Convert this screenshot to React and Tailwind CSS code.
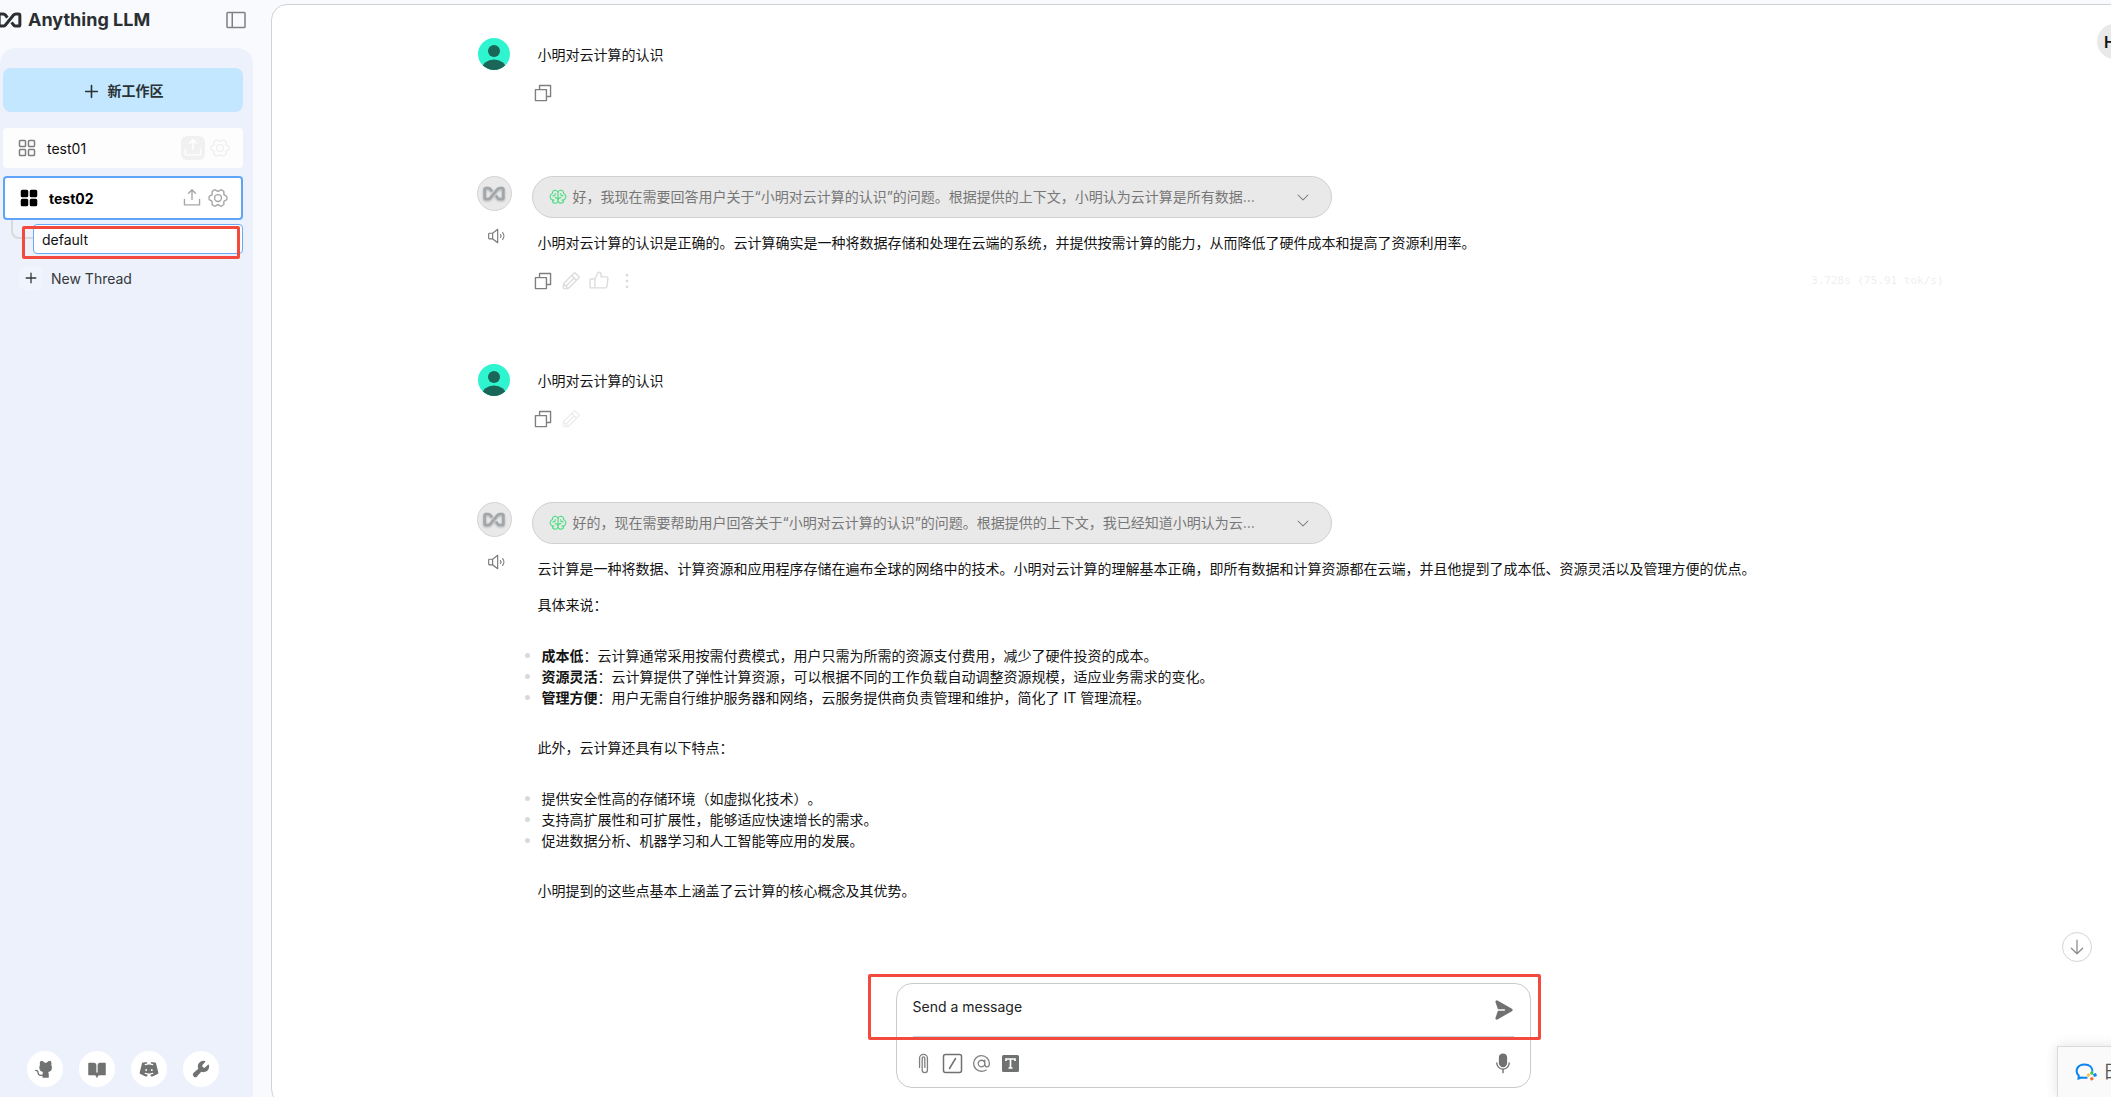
import {
  PiArrowDown, PiAt, PiBookOpenFill, PiBrain, PiCaretDown, PiCopy, PiDiscordLogoFill,
  PiDotsThreeVerticalBold, PiGearSix, PiGithubLogoFill, PiMicrophoneFill, PiPaperclipHorizontal,
  PiPaperPlaneRightFill, PiPencil, PiPlusBold, PiSidebarSimple, PiSpeakerHigh, PiSquaresFour,
  PiSquaresFourFill, PiThumbsUp, PiUploadSimple, PiWrenchFill,
} from 'react-icons/pi'

const footerLinks = [
  { label: 'GitHub', icon: PiGithubLogoFill },
  { label: 'Docs', icon: PiBookOpenFill },
  { label: 'Discord', icon: PiDiscordLogoFill },
  { label: 'Settings', icon: PiWrenchFill },
]

function LogoMark({ className }) {
  return (
    <svg viewBox="0 0 26 17" className={className} fill="none" stroke="currentColor" strokeWidth="3.2" strokeLinejoin="round" aria-hidden="true">
      <path d="M10.8 6 L8.6 3.200 Q7.700 2 6.200 2 H3.500 Q2 2 2 3.500 V13.500 Q2 15 3.500 15 H6.200 Q7.700 15 8.700 13.800 L17.300 3.200 Q18.300 2 19.800 2 H22.500 Q24 2 24 3.500 V13.500 Q24 15 22.500 15 H19.800 Q18.300 15 17.400 13.800 L15.200 11" />
    </svg>
  )
}

function UserAvatar() {
  return (
    <svg viewBox="0 0 32 32" className="size-8 mx-auto rounded-full" aria-hidden="true">
      <rect width="32" height="32" fill="#2ef4d0" />
      <circle cx="16" cy="13" r="6" fill="#1a6658" />
      <ellipse cx="16" cy="31" rx="12" ry="9.500" fill="#1a6658" />
    </svg>
  )
}

function IconButton({ label, className = 'text-[#7f7f7f]', children }) {
  return <button type="button" aria-label={label} className={className}>{children}</button>
}

function UserMessage({ text, edit }) {
  return (
    <article className="grid grid-cols-[36px_1fr] gap-x-5">
      <UserAvatar />
      <div className="pt-[7px] pl-1.5">
        <p>{text}</p>
        <div className="mt-5 h-4 flex items-center gap-1.5 -ml-1.5">
          <IconButton label="Copy"><PiCopy className="size-[22px]" /></IconButton>
          {edit && <IconButton label="Edit" className="text-[#ededed]"><PiPencil className="size-[22px]" /></IconButton>}
        </div>
      </div>
    </article>
  )
}

function AssistantMessage({ thought, children }) {
  return (
    <article className="grid grid-cols-[36px_1fr] gap-x-5">
      <div className="flex flex-col items-end">
        <span className="size-[35px] rounded-full border border-[#d4d4d4] bg-[#e9e9e9] flex items-center justify-center text-[#a0a6a9]">
          <LogoMark className="w-[22px] h-[15px] drop-shadow-[0_1px_1px_rgba(0,0,0,0.25)]" />
        </span>
        <IconButton label="Speak" className="mt-4 mr-[7px] text-[#777]"><PiSpeakerHigh className="size-[18px]" /></IconButton>
      </div>
      <div>
        <button type="button" className="flex items-center w-full max-w-[800px] h-[42px] pl-4 pr-5 rounded-full border border-[#d0d0d0] bg-[#e9e9e9] text-[#777] text-left">
          <PiBrain className="size-[18px] mr-1.5 text-[#4ade80]" />
          <span>{thought}</span>
          <PiCaretDown className="size-4 ml-auto" />
        </button>
        <div className="pl-1.5 pt-[15px]">{children}</div>
      </div>
    </article>
  )
}

function BulletList({ children }) {
  return <ul className="my-[30px] leading-[21px]">{children}</ul>
}

function Bullet({ title, children }) {
  return (
    <li className="flex items-center -ml-[13px]">
      <span className="size-[5px] mr-3 rounded-full bg-[#d9d9d9]" />
      <span>{title && <strong>{title}</strong>}{children}</span>
    </li>
  )
}

function Sidebar() {
  return (
    <aside className="w-[271px] shrink-0 flex flex-col">
      <header className="h-12 flex items-center pb-3 pt-1 pr-[23px] text-[#2c2f31]">
        <LogoMark className="w-[25px] h-4 -ml-[3px]" />
        <span className="ml-1.5 text-[18px] leading-6 font-bold">Anything LLM</span>
        <button type="button" aria-label="Toggle sidebar" className="ml-auto text-[#808080]"><PiSidebarSimple className="size-6" /></button>
      </header>
      <div className="flex-1 -mb-3.5 w-[253px] pl-[3px] pr-2.5 pt-5 pb-6 rounded-2xl bg-[#ecf1fb] flex flex-col">
        <button type="button" className="h-11 pt-0.5 rounded-lg bg-[#c2e7fe] flex items-center justify-center gap-2 text-[#2b3236] font-bold">
          <PiPlusBold className="size-[17px]" />新工作区
        </button>

        <div className="mt-4 h-10 rounded bg-[#fdfdfd] flex items-center px-3">
          <PiSquaresFour className="size-6 text-[#7f7f7f]" />
          <a href="#test01" className="ml-2 pt-0.5 flex-1 text-[#111]">test01</a>
          <button type="button" aria-label="Upload" className="size-6 rounded-md bg-[#f1f1f1] text-white flex items-center justify-center"><PiUploadSimple className="size-[22px]" /></button>
          <button type="button" aria-label="Settings" className="ml-1 text-[#f0f0f0]"><PiGearSix className="size-[22px]" /></button>
        </div>

        <div className="mt-2 h-11 rounded border-2 border-[#5ea5f8] bg-white flex items-center px-3">
          <PiSquaresFourFill className="size-6 text-black" />
          <a href="#test02" className="ml-2 pt-0.5 flex-1 font-bold text-black">test02</a>
          <button type="button" aria-label="Upload" className="text-[#a6a6a6]"><PiUploadSimple className="size-[22px]" /></button>
          <button type="button" aria-label="Settings" className="ml-1 text-[#a6a6a6]"><PiGearSix className="size-[22px]" /></button>
        </div>

        <div className="relative flex pl-2">
          <span className="w-[22px] h-[19px] border-l-2 border-b-2 border-[#d8dadd] rounded-bl-lg" />
          <a href="#default" className="mt-1 pt-0.5 flex-1 h-[30px] rounded border border-[#6aa9f7] bg-white flex items-center pl-2 text-[#111]">default</a>
          <span className="absolute left-[19px] right-[3px] top-1.5 h-[33px] rounded-xs border-3 border-[#f44a3e]" />
        </div>

        <button type="button" className="mt-3 ml-4 flex items-center gap-2 text-[#35383a]">
          <span className="size-6 rounded-md bg-[#f0f4fc] flex items-center justify-center"><PiPlusBold className="size-3.5" /></span>
          <span className="pt-0.5">New Thread</span>
        </button>

        <nav className="mt-auto flex gap-4 pl-6">
          {footerLinks.map(({ label, icon: Icon }) => (
            <a key={label} href={`#${label}`} aria-label={label} className="size-9 rounded-full bg-white flex items-center justify-center text-[#6f7270]">
              <Icon className="size-5" />
            </a>
          ))}
        </nav>
      </div>
    </aside>
  )
}

function Composer() {
  return (
    <form className="relative w-full max-w-[635px] mx-auto mb-4 h-[105px] shrink-0 px-4 rounded-2xl border border-[#cacaca] bg-white flex flex-col">
      <div className="h-[53px] flex items-center border-b border-[#cbd5e1] text-[#6f7270]">
        <input aria-label="Message" placeholder="Send a message" className="flex-1 pb-1.5 outline-none placeholder:text-[#222]" />
        <button type="submit" aria-label="Send"><PiPaperPlaneRightFill className="size-[22px]" /></button>
      </div>
      <div className="flex-1 flex items-center gap-2 pt-0.5 text-[#6f7270]">
        <IconButton label="Attach"><PiPaperclipHorizontal className="size-[21px] -rotate-90" /></IconButton>
        <IconButton label="Commands">
          <svg viewBox="0 0 21 21" className="size-[21px]" fill="none" stroke="#6f7270" strokeWidth="1.500"><rect x="1.500" y="1.500" width="18" height="18" rx="2" /><path d="M7.500 15.500 13.500 5.500" strokeLinecap="round" /></svg>
        </IconButton>
        <IconButton label="Agents"><PiAt className="size-[21px]" /></IconButton>
        <IconButton label="Text size">
          <svg viewBox="0 0 21 21" className="size-[21px]"><rect x="2" y="2" width="17" height="17" rx="1.500" fill="#6f7270" /><path d="M6 8V6h9v2M10.500 6v9M8.500 15h4" fill="none" stroke="#fff" strokeWidth="1.700" /></svg>
        </IconButton>
        <button type="button" aria-label="Microphone" className="ml-auto"><PiMicrophoneFill className="size-[22px]" /></button>
      </div>
      <span className="pointer-events-none absolute -left-[29px] -right-[11px] -top-2.5 h-[66px] rounded-xs border-3 border-[#f44a3e]" />
    </form>
  )
}

export default function App() {
  return (
    <div className="relative flex h-screen overflow-hidden bg-[#f9fafd] text-[14px] leading-5 text-[#141414] font-['Inter','Noto_Sans_CJK_SC',sans-serif] [text-spacing-trim:space-all]">
      <Sidebar />

      <main className="relative flex-1 mt-1 -mb-2 -mr-11 rounded-2xl border border-[#d0d3d6] bg-white flex flex-col">
        <div className="flex-1 min-h-0 overflow-hidden pt-[33px] pr-[7px]">
          <div className="max-w-[1468px] mx-auto flex flex-col gap-[75px]">
            <UserMessage text="小明对云计算的认识" />

            <AssistantMessage thought="好，我现在需要回答用户关于“小明对云计算的认识”的问题。根据提供的上下文，小明认为云计算是所有数据…">
              <p>小明对云计算的认识是正确的。云计算确实是一种将数据存储和处理在云端的系统，并提供按需计算的能力，从而降低了硬件成本和提高了资源利用率。</p>
              <div className="mt-5 h-4 flex items-center gap-1.5 -ml-1.5 text-[#dcdcdc]">
                <IconButton label="Copy"><PiCopy className="size-[22px]" /></IconButton>
                <IconButton label="Edit" className=""><PiPencil className="size-[22px]" /></IconButton>
                <IconButton label="Good response" className=""><PiThumbsUp className="size-[22px]" /></IconButton>
                <IconButton label="More" className=""><PiDotsThreeVerticalBold className="size-[22px]" /></IconButton>
                <span className="ml-auto text-[11px] text-[#efefef] font-['DejaVu_Sans_Mono',monospace]">3.728s (75.91 tok/s)</span>
              </div>
            </AssistantMessage>

            <UserMessage text="小明对云计算的认识" edit />

            <AssistantMessage thought="好的，现在需要帮助用户回答关于“小明对云计算的认识”的问题。根据提供的上下文，我已经知道小明认为云…">
              <p>云计算是一种将数据、计算资源和应用程序存储在遍布全球的网络中的技术。小明对云计算的理解基本正确，即所有数据和计算资源都在云端，并且他提到了成本低、资源灵活以及管理方便的优点。</p>
              <p className="mt-4">具体来说：</p>
              <BulletList>
                <Bullet title="成本低">：云计算通常采用按需付费模式，用户只需为所需的资源支付费用，减少了硬件投资的成本。</Bullet>
                <Bullet title="资源灵活">：云计算提供了弹性计算资源，可以根据不同的工作负载自动调整资源规模，适应业务需求的变化。</Bullet>
                <Bullet title="管理方便">：用户无需自行维护服务器和网络，云服务提供商负责管理和维护，简化了 IT 管理流程。</Bullet>
              </BulletList>
              <p>此外，云计算还具有以下特点：</p>
              <BulletList>
                <Bullet>提供安全性高的存储环境（如虚拟化技术）。</Bullet>
                <Bullet>支持高扩展性和可扩展性，能够适应快速增长的需求。</Bullet>
                <Bullet>促进数据分析、机器学习和人工智能等应用的发展。</Bullet>
              </BulletList>
              <p>小明提到的这些点基本上涵盖了云计算的核心概念及其优势。</p>
            </AssistantMessage>
          </div>
        </div>

        <Composer />

        <button type="button" aria-label="Account" className="absolute right-[22px] top-[19px] size-[35px] rounded-full bg-[#e9e9e9] pl-[7px] text-left text-[16px] font-semibold">H</button>
        <button type="button" aria-label="Scroll to bottom" className="absolute right-[62px] bottom-[142px] size-[30px] rounded-full border border-[#d4d4d4] bg-white flex items-center justify-center text-[#8a8a8a]">
          <PiArrowDown className="size-5" />
        </button>
      </main>

      {/* docked chat tool, partly off the right edge */}
      <div className="absolute left-full -ml-[54px] bottom-0 w-30 h-[51px] pl-[17px] border-l border-t border-[#dadada] bg-[#fafafa] shadow-[0_0_12px_rgba(0,0,0,0.12)] flex items-center gap-1.5 text-[18px] text-[#555]">
        <svg viewBox="0 0 22 18" className="w-[22px] h-[18px]" fill="none" strokeWidth="2" aria-hidden="true">
          <path d="M12.500 14.500c-2 .5-4.500.3-6 0L3.500 15.500l.3-2.800C-.5 8.500 2 1.500 9.500 1.500c5 0 8 3 8 7" stroke="#0a84f0" />
          <path d="M15.500 9.500l2.500 1" stroke="#3cc051" strokeWidth="3" />
          <path d="M18.500 12.500l3-1" stroke="#0a84f0" strokeWidth="3" />
          <path d="M12.500 13l2-1.800" stroke="#fbc02d" strokeWidth="3" />
          <path d="M16 14.500l1.500 2.500" stroke="#fa6b2c" strokeWidth="3" />
        </svg>
        日
      </div>
    </div>
  )
}
